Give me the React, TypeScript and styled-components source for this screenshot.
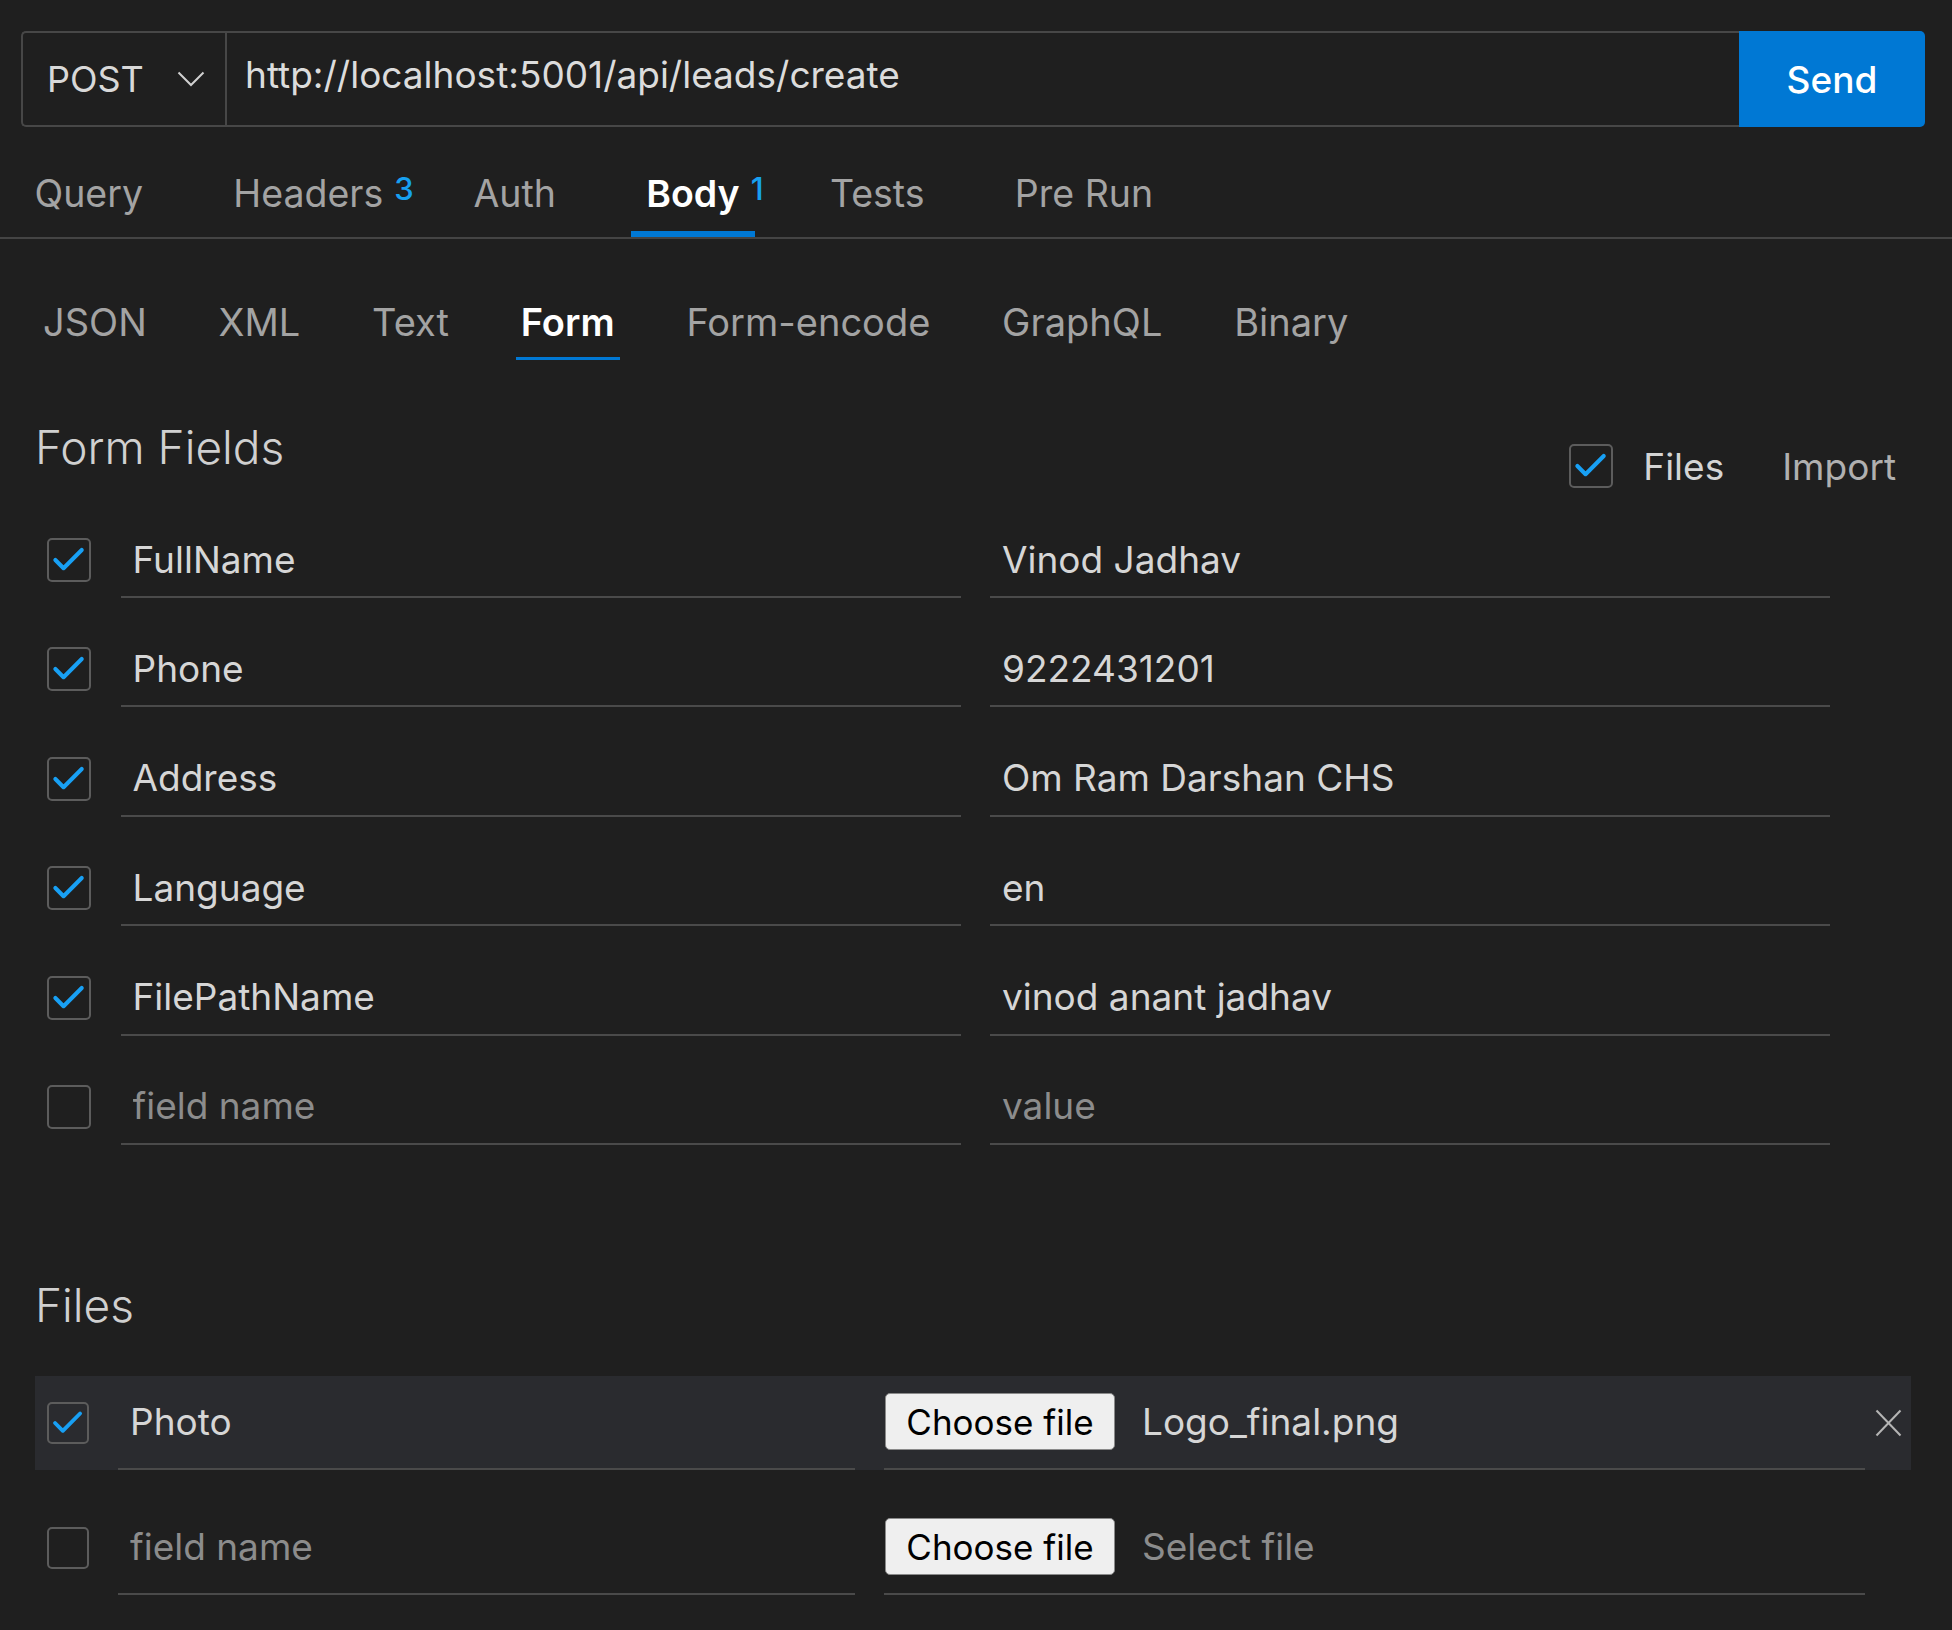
import React from "react";
import styled, { createGlobalStyle } from "styled-components";

const GlobalStyle = createGlobalStyle`
  html, body {
    margin: 0;
    padding: 0;
    background: #1f1f1f;
  }
  body {
    font-family: "Inter", "Liberation Sans", sans-serif;
    color: #d4d4d4;
    min-height: 1630px;
  }
  * { box-sizing: border-box; }
`;

const Page = styled.div`
  padding-top: 31px;
  min-height: 1630px;
  background: #1f1f1f;
`;

const UrlBar = styled.div`
  display: flex;
  height: 96px;
  margin: 0 27px 0 21px;
`;

const UrlGroup = styled.div`
  flex: 1;
  display: flex;
  border: 2px solid #474747;
  border-right: none;
  border-radius: 5px 0 0 5px;
`;

const MethodSelect = styled.div`
  width: 204px;
  display: flex;
  align-items: center;
  justify-content: space-between;
  padding: 0 20px 0 24px;
  border-right: 2px solid #474747;
  font-size: 36px;
  color: #d8d8d8;
`;

const UrlInput = styled.input`
  flex: 1;
  background: transparent;
  border: none;
  outline: none;
  padding: 0 0 10px 18px;
  font-family: inherit;
  font-size: 37px;
  color: #dcdcdc;
`;

const SendButton = styled.button`
  width: 186px;
  height: 96px;
  border: none;
  border-radius: 0 5px 5px 0;
  background: #0078d4;
  color: #ffffff;
  font-family: inherit;
  font-size: 37px;
  font-weight: 500;
  padding: 0;
`;

const TabBar = styled.div`
  display: flex;
  gap: 60.3px;
  margin-top: 44px;
  padding-left: 19.5px;
  border-bottom: 2px solid #444444;
`;

const Tab = styled.div<{ $active?: boolean }>`
  padding: 0 15px 14px;
  font-size: 37.5px;
  line-height: 46px;
  font-weight: ${(p) => (p.$active ? 600 : 400)};
  color: ${(p) => (p.$active ? "#ffffff" : "#a3a3a3")};
  border-bottom: 6px solid ${(p) => (p.$active ? "#0078d4" : "transparent")};
`;

const TabLabel = styled.span`
  position: relative;
`;

const Sup = styled.span`
  position: absolute;
  left: calc(100% + 11px);
  top: 2px;
  font-size: 31px;
  line-height: 1;
  font-weight: 500;
  color: #17a0f0;
`;

const BodyPane = styled.div`
  padding: 0 27px 0 35px;
`;

const SubTabBar = styled.div`
  display: flex;
  gap: 61.8px;
  margin: 61px 0 0 3px;
`;

const SubTab = styled.div<{ $active?: boolean }>`
  padding: 0 5px 13px;
  font-size: 38px;
  line-height: 44px;
  font-weight: ${(p) => (p.$active ? 600 : 400)};
  color: ${(p) => (p.$active ? "#ffffff" : "#a3a3a3")};
  border-bottom: 3px solid ${(p) => (p.$active ? "#0078d4" : "transparent")};
`;

const SectionHeader = styled.div`
  display: flex;
  justify-content: space-between;
  align-items: flex-start;
  margin-top: 59px;
`;

const SectionTitle = styled.h2<{ $gap?: number }>`
  margin: ${(p) => p.$gap ?? 0}px 0 0;
  font-size: 46px;
  line-height: 56px;
  font-weight: 300;
  color: #d0d0d0;
`;

const HeaderActions = styled.div`
  display: flex;
  align-items: center;
  margin: 25px 29px 0 0;
  height: 44px;
`;

const ActionLabel = styled.span<{ $muted?: boolean }>`
  font-size: 37px;
  color: ${(p) => (p.$muted ? "#b0b0b0" : "#d4d4d4")};
  margin-left: ${(p) => (p.$muted ? 58 : 30)}px;
`;

const Box = styled.span<{ $size?: number }>`
  width: ${(p) => p.$size ?? 44}px;
  height: ${(p) => p.$size ?? 44}px;
  border: 2px solid #5c5c5c;
  border-radius: 5px;
  display: inline-flex;
  align-items: center;
  justify-content: center;
  flex-shrink: 0;
`;

const FieldList = styled.div`
  display: grid;
  row-gap: 33.4px;
  margin-top: 34px;
`;

const FieldRow = styled.div`
  display: grid;
  grid-template-columns: 44px 840px 840px;
  column-gap: 29.5px;
  align-items: center;
  height: 76px;
  padding-left: 12px;
`;

const LineInput = styled.input`
  width: 100%;
  height: 100%;
  background: transparent;
  border: none;
  border-bottom: 2px solid #4a4a4a;
  outline: none;
  padding: 0 0 0 12px;
  font-family: inherit;
  font-size: 37px;
  color: #d6d6d6;
  &::placeholder {
    color: #8c8c8c;
  }
`;

const FileList = styled.div`
  display: grid;
  row-gap: 31px;
  margin-top: 43px;
`;

const FileRow = styled.div<{ $selected?: boolean }>`
  display: grid;
  grid-template-columns: 42px 737px 981px 27px;
  column-gap: 29px;
  align-items: center;
  width: 1876px;
  height: 94px;
  padding: 0 9px 0 12px;
  background: ${(p) => (p.$selected ? "#2a2b2f" : "transparent")};
  & > :nth-child(4) {
    margin-left: -19px;
  }
`;

const FileCell = styled.div`
  display: flex;
  align-items: center;
  height: 100%;
  border-bottom: 2px solid #4a4a4a;
`;

const ChooseButton = styled.button`
  width: 230px;
  height: 57px;
  margin-left: 1px;
  background: #efefef;
  border: 1px solid #8a8a8a;
  border-radius: 5px;
  font-family: inherit;
  font-size: 35px;
  color: #000000;
  padding: 0;
`;

const FileName = styled.span<{ $empty?: boolean }>`
  margin-left: 27px;
  font-size: 37px;
  color: ${(p) => (p.$empty ? "#8c8c8c" : "#d6d6d6")};
`;

const RemoveIcon = styled.svg`
  width: 27px;
  height: 28px;
`;

const Check = () => (
  <svg width="44" height="44" viewBox="0 0 44 44" style={{ display: "block" }}>
    <polyline
      points="7,22 16,31 36,11"
      fill="none"
      stroke="#18a0f4"
      strokeWidth="4.5"
      strokeLinecap="round"
      strokeLinejoin="round"
    />
  </svg>
);

const CheckBox = ({ checked, size }: { checked?: boolean; size?: number }) => (
  <Box $size={size}>{checked ? <Check /> : null}</Box>
);

const Chevron = () => (
  <svg width="28" height="16" viewBox="0 0 28 16">
    <polyline points="1.5,1.5 14,14 26.5,1.5" fill="none" stroke="#d0d0d0" strokeWidth="2" />
  </svg>
);

const tabs = [
  { label: "Query" },
  { label: "Headers", sup: "3" },
  { label: "Auth" },
  { label: "Body", sup: "1", active: true },
  { label: "Tests" },
  { label: "Pre Run" },
];

const subTabs = ["JSON", "XML", "Text", "Form", "Form-encode", "GraphQL", "Binary"];

const fields = [
  { name: "FullName", value: "Vinod Jadhav" },
  { name: "Phone", value: "9222431201" },
  { name: "Address", value: "Om Ram Darshan CHS" },
  { name: "Language", value: "en" },
  { name: "FilePathName", value: "vinod anant jadhav" },
];

export default function App() {
  return (
    <Page>
      <GlobalStyle />
      <UrlBar>
        <UrlGroup>
          <MethodSelect>
            <span>POST</span>
            <Chevron />
          </MethodSelect>
          <UrlInput readOnly value="http://localhost:5001/api/leads/create" />
        </UrlGroup>
        <SendButton>Send</SendButton>
      </UrlBar>

      <TabBar>
        {tabs.map((t) => (
          <Tab key={t.label} $active={t.active}>
            <TabLabel>
              {t.label}
              {t.sup ? <Sup>{t.sup}</Sup> : null}
            </TabLabel>
          </Tab>
        ))}
      </TabBar>

      <BodyPane>
        <SubTabBar>
          {subTabs.map((s) => (
            <SubTab key={s} $active={s === "Form"}>
              {s}
            </SubTab>
          ))}
        </SubTabBar>

        <SectionHeader>
          <SectionTitle>Form Fields</SectionTitle>
          <HeaderActions>
            <CheckBox checked />
            <ActionLabel>Files</ActionLabel>
            <ActionLabel $muted>Import</ActionLabel>
          </HeaderActions>
        </SectionHeader>

        <FieldList>
          {fields.map((f) => (
            <FieldRow key={f.name}>
              <CheckBox checked />
              <LineInput readOnly value={f.name} />
              <LineInput readOnly value={f.value} />
            </FieldRow>
          ))}
          <FieldRow>
            <CheckBox />
            <LineInput readOnly placeholder="field name" />
            <LineInput readOnly placeholder="value" />
          </FieldRow>
        </FieldList>

        <SectionTitle $gap={132}>Files</SectionTitle>

        <FileList>
          <FileRow $selected>
            <CheckBox checked size={42} />
            <LineInput readOnly value="Photo" />
            <FileCell>
              <ChooseButton>Choose file</ChooseButton>
              <FileName>Logo_final.png</FileName>
            </FileCell>
            <RemoveIcon viewBox="0 0 27 28">
              <line x1="1.5" y1="1.5" x2="25.5" y2="26.5" stroke="#b5b5b5" strokeWidth="2" />
              <line x1="25.5" y1="1.5" x2="1.5" y2="26.5" stroke="#b5b5b5" strokeWidth="2" />
            </RemoveIcon>
          </FileRow>
          <FileRow>
            <CheckBox size={42} />
            <LineInput readOnly placeholder="field name" />
            <FileCell>
              <ChooseButton>Choose file</ChooseButton>
              <FileName $empty>Select file</FileName>
            </FileCell>
            <span />
          </FileRow>
        </FileList>
      </BodyPane>
    </Page>
  );
}
